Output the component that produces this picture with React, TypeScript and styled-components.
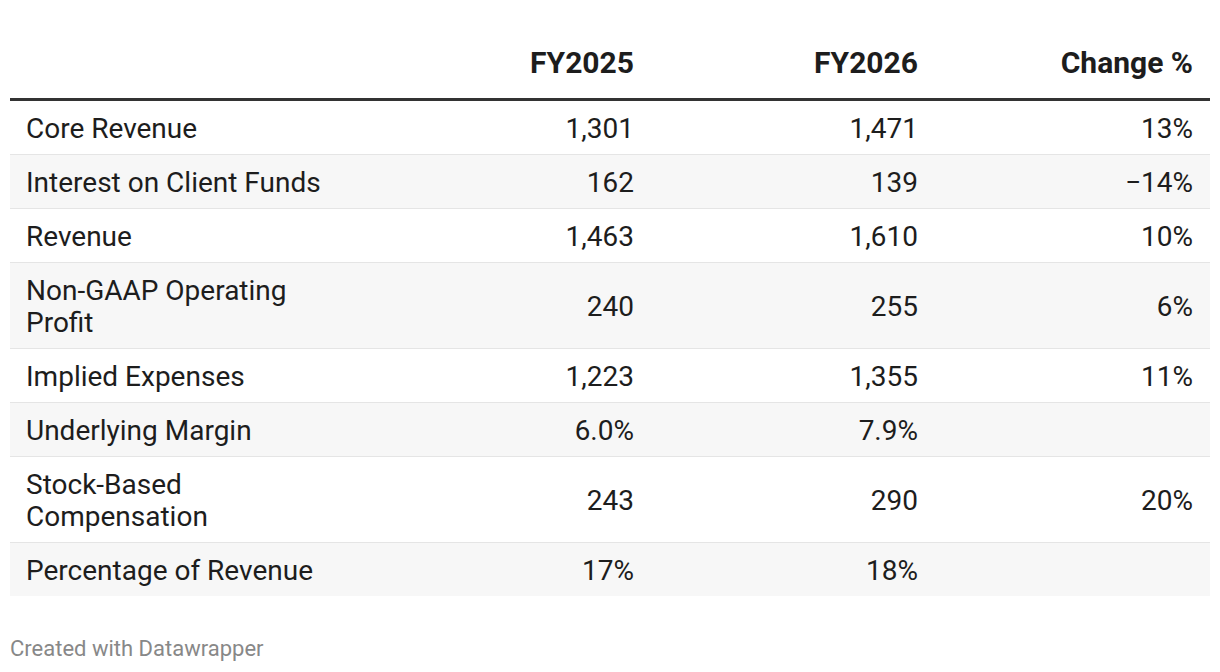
import React from 'react';
import styled, { createGlobalStyle } from 'styled-components';

const GlobalStyle = createGlobalStyle`
  html, body {
    margin: 0;
    padding: 0;
    background: #ffffff;
  }
  body {
    font-family: Roboto, "Liberation Sans", Arial, sans-serif;
    color: #1d1d1d;
  }
`;

const Page = styled.div`
  width: 1220px;
  height: 672px;
  padding: 37px 10px 0;
  box-sizing: border-box;
`;

const Table = styled.div`
  display: grid;
  grid-template-columns: 340px 291px 284px 285px;
  width: 1200px;
`;

const HeadCell = styled.div<{ $first?: boolean; $last?: boolean }>`
  font-size: 30px;
  line-height: 32px;
  font-weight: 700;
  color: #1d1d1d;
  text-align: right;
  padding: 10px ${({ $last }) => ($last ? '17px' : '7px')} 19px
    ${({ $first }) => ($first ? '17px' : '7px')};
  border-bottom: 3px solid #333333;
`;

const Cell = styled.div<{ $label?: boolean; $last?: boolean; $shade?: boolean; $end?: boolean }>`
  display: flex;
  align-items: center;
  justify-content: ${({ $label }) => ($label ? 'flex-start' : 'flex-end')};
  text-align: ${({ $label }) => ($label ? 'left' : 'right')};
  font-size: 28px;
  line-height: 32px;
  color: #1d1d1d;
  background: ${({ $shade }) => ($shade ? '#f7f7f7' : '#ffffff')};
  padding: 12px ${({ $label, $last }) => ($label || $last ? '17px' : '7px')} 9px
    ${({ $label }) => ($label ? '16px' : '7px')};
  border-bottom: ${({ $end }) => ($end ? 'none' : '1px solid #e5e5e5')};
  font-variant-numeric: tabular-nums;
`;

const Footer = styled.div`
  margin-top: 41px;
  font-size: 22px;
  line-height: 24px;
  color: #888888;
`;

const rows = [
  { label: 'Core Revenue', a: '1,301', b: '1,471', c: '13%' },
  { label: 'Interest on Client Funds', a: '162', b: '139', c: '\u221214%' },
  { label: 'Revenue', a: '1,463', b: '1,610', c: '10%' },
  { label: 'Non-GAAP Operating Profit', a: '240', b: '255', c: '6%' },
  { label: 'Implied Expenses', a: '1,223', b: '1,355', c: '11%' },
  { label: 'Underlying Margin', a: '6.0%', b: '7.9%', c: '' },
  { label: 'Stock-Based Compensation', a: '243', b: '290', c: '20%' },
  { label: 'Percentage of Revenue', a: '17%', b: '18%', c: '' },
];

const App: React.FC = () => {
  return (
    <>
      <GlobalStyle />
      <Page>
        <Table>
          <HeadCell $first />
          <HeadCell>FY2025</HeadCell>
          <HeadCell>FY2026</HeadCell>
          <HeadCell $last>Change %</HeadCell>
          {rows.map((row, i) => {
            const shade = i % 2 === 1;
            const end = i === rows.length - 1;
            return (
              <React.Fragment key={row.label}>
                <Cell $label $shade={shade} $end={end}>{row.label}</Cell>
                <Cell $shade={shade} $end={end}>{row.a}</Cell>
                <Cell $shade={shade} $end={end}>{row.b}</Cell>
                <Cell $last $shade={shade} $end={end}>{row.c}</Cell>
              </React.Fragment>
            );
          })}
        </Table>
        <Footer>Created with Datawrapper</Footer>
      </Page>
    </>
  );
};

export default App;
